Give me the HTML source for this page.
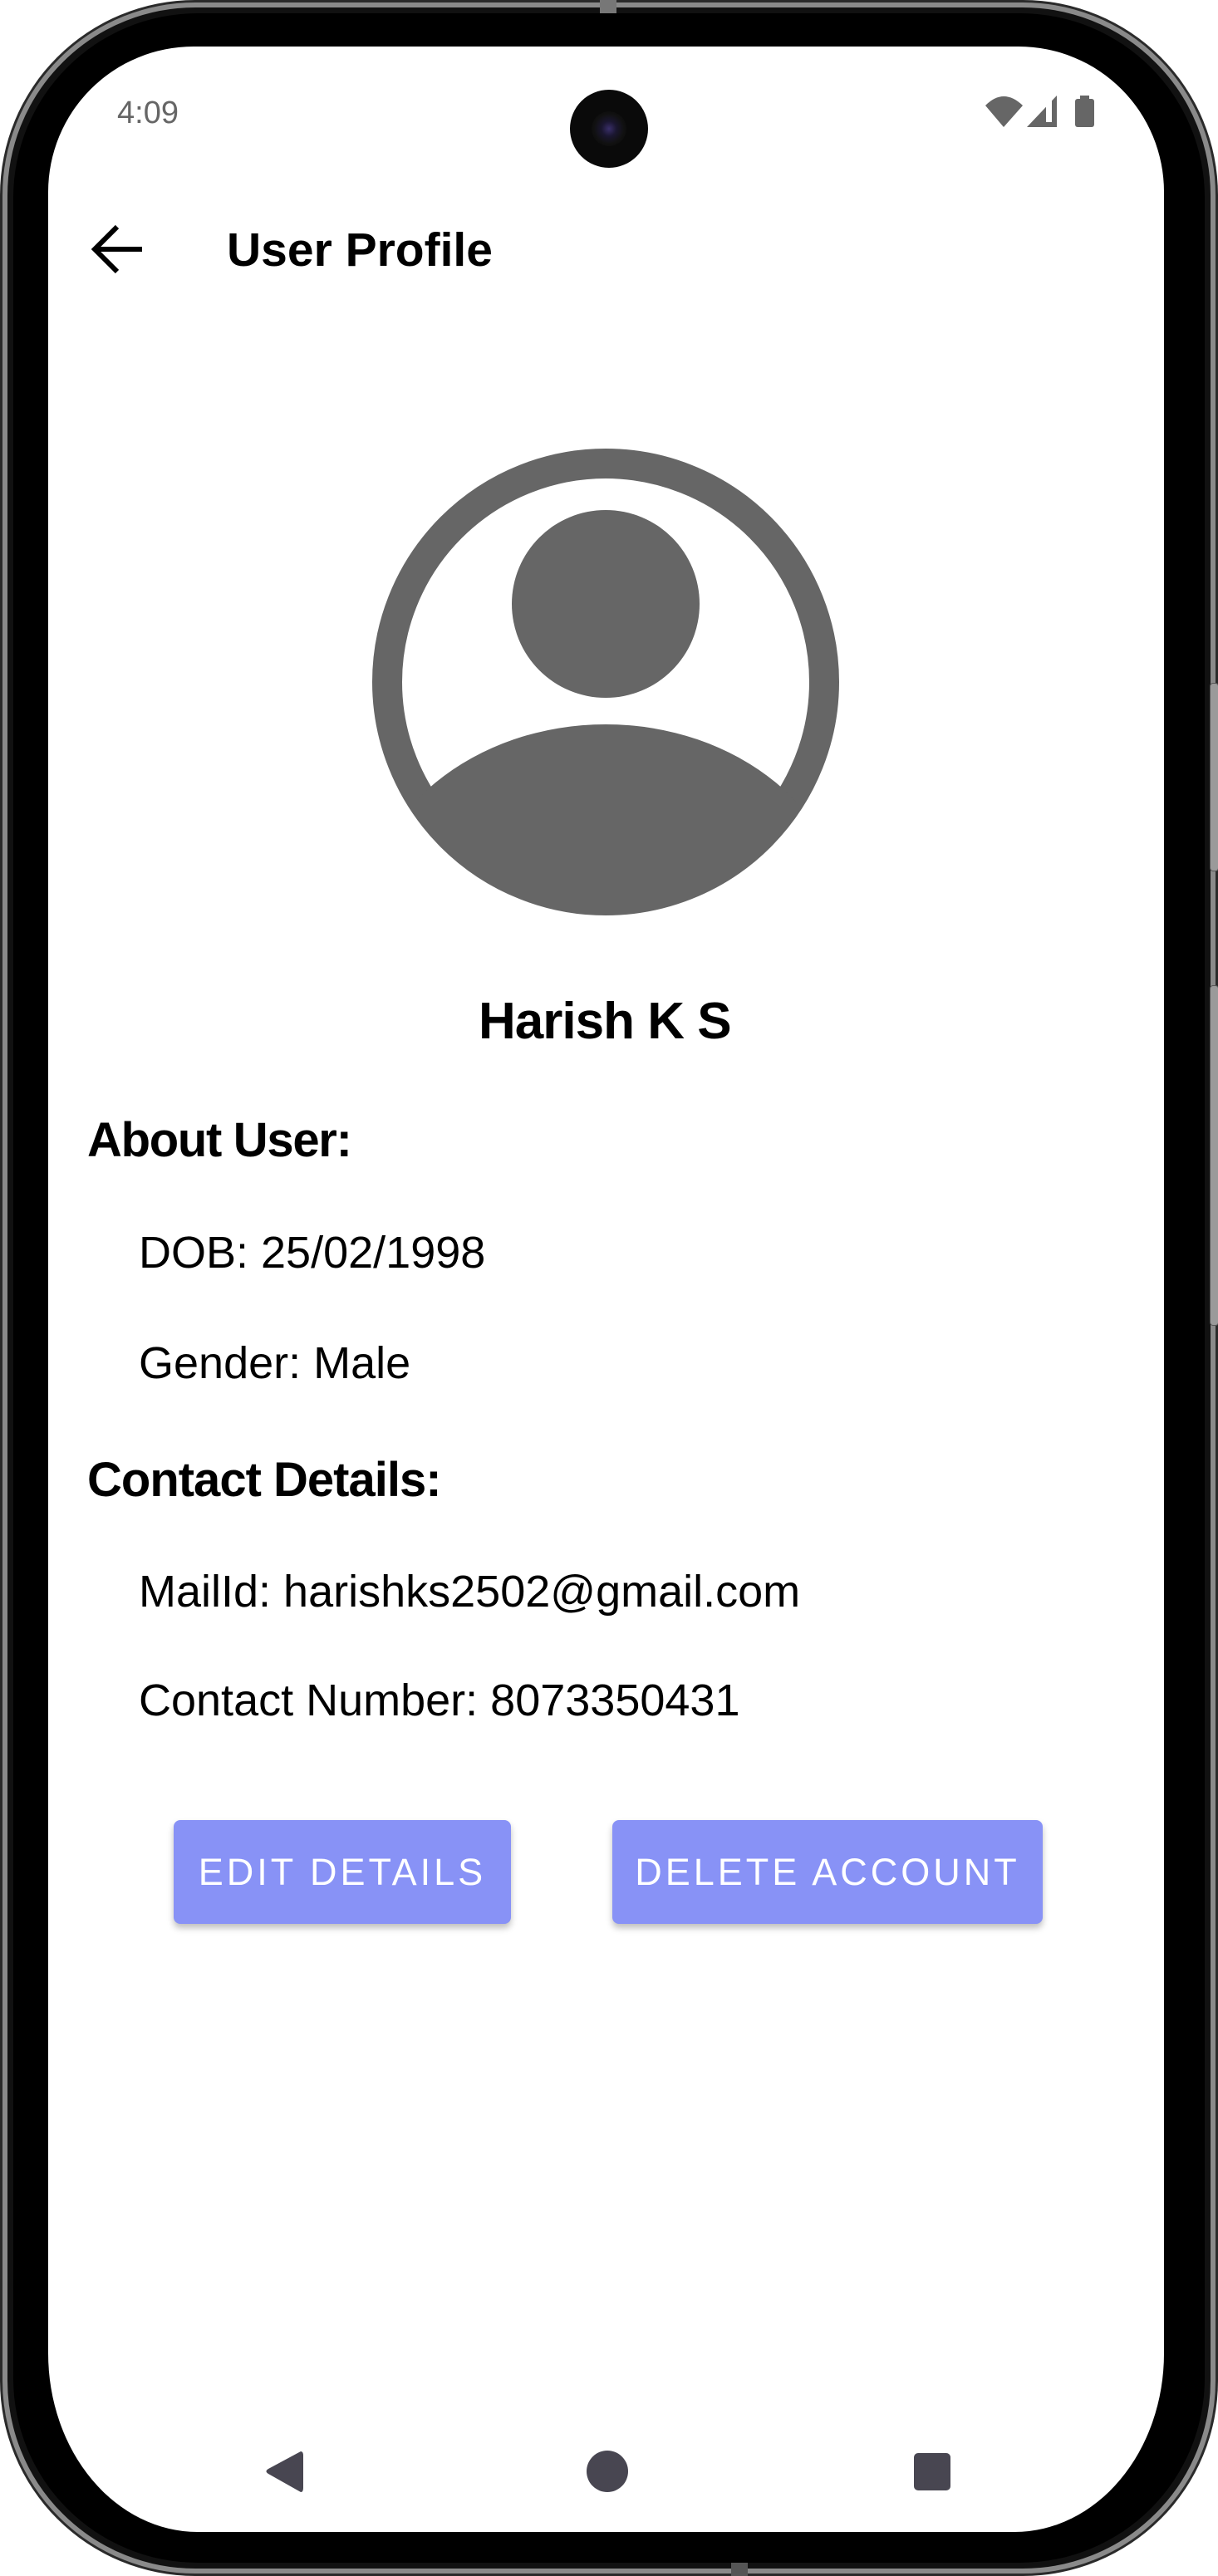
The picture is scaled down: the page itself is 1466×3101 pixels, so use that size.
<!DOCTYPE html>
<html><head><meta charset="utf-8"><style>
html,body{margin:0;padding:0;background:#fff;}
body{width:1466px;height:3101px;position:relative;overflow:hidden;font-family:"Liberation Sans",Arial,sans-serif;}
.abs{position:absolute;}
#outer{left:0;top:0;width:1466px;height:3101px;border-radius:235px;background:#2a2a2a;}
#ring{left:3px;top:3px;width:1448px;height:3083px;border-radius:232px;border:6px solid #8a8a8a;background:#111;}
#black{left:16px;top:16px;width:1434px;height:3069px;border-radius:222px;background:#000;}
#screen{left:58px;top:56px;width:1343px;height:2992px;border-radius:175px 175px 180px 180px/175px 175px 215px 215px;background:#fff;overflow:hidden;}
.t{position:absolute;white-space:nowrap;line-height:1;color:#000;}
.btn{position:absolute;background:#8892f6;border-radius:8px;box-shadow:0 5px 8px rgba(0,0,0,0.25);color:#fff;font-size:45px;letter-spacing:4px;display:flex;align-items:center;justify-content:center;}
.side{position:absolute;left:1456px;width:9px;background:#9a9a9a;border-radius:4px;border:1px solid #555;}
</style></head><body>
<div id="outer" class="abs"></div>
<div id="ring" class="abs"></div>
<div class="abs" style="left:722px;top:0;width:20px;height:16px;background:#777;"></div>
<div class="abs" style="left:880px;top:3085px;width:20px;height:16px;background:#555;"></div>
<div class="side" style="top:822px;height:225px;"></div>
<div class="side" style="top:1186px;height:408px;"></div>
<div id="black" class="abs"></div>
<div id="screen" class="abs"></div>

<!-- status bar -->
<div class="t" style="left:141px;top:117px;font-size:38px;color:#666;">4:09</div>
<div class="abs" style="left:686px;top:108px;width:94px;height:94px;border-radius:50%;background:#0a0a0a;"></div>
<div class="abs" style="left:712px;top:134px;width:42px;height:42px;border-radius:50%;background:radial-gradient(circle,#3a2f6a 0,#1a1630 30%,#111 60%,#050505 100%);"></div>
<svg class="abs" style="left:1180px;top:110px" width="150" height="50" viewBox="1180 110 150 50">
<path d="M1186 127 Q1208 105 1231 127 L1208 153 Z" fill="#666"/>
<path d="M1236 153 L1272 115 L1272 153 Z" fill="#666"/>
<path d="M1259 128 L1266 121 L1266 147 L1259 147 Z" fill="#fff"/>
<rect x="1294" y="119" width="23" height="34" rx="3" fill="#666"/>
<rect x="1300" y="115" width="11" height="6" fill="#666"/>
</svg>

<!-- app bar -->
<svg class="abs" style="left:100px;top:260px" width="90" height="80" viewBox="100 260 90 80">
<path d="M171 300 L116 300 M141 273 L114 300 L141 327" stroke="#000" stroke-width="6" fill="none"/>
</svg>
<div class="t" style="left:273px;top:273px;font-size:57px;font-weight:bold;">User Profile</div>

<!-- avatar -->
<svg class="abs" style="left:440px;top:530px" width="580" height="580" viewBox="440 530 580 580">
<defs><clipPath id="c"><circle cx="729" cy="821" r="280"/></clipPath></defs>
<circle cx="729" cy="821" r="263" fill="none" stroke="#666" stroke-width="36"/>
<circle cx="729" cy="727" r="113" fill="#666"/>
<ellipse cx="729" cy="1112" rx="290" ry="240" fill="#666" clip-path="url(#c)"/>
</svg>

<div class="t" style="left:576px;top:1199px;font-size:62px;font-weight:bold;letter-spacing:-1px;">Harish K S</div>

<div class="t" style="left:105px;top:1344px;font-size:58px;font-weight:bold;letter-spacing:-1.3px;">About User:</div>
<div class="t" style="left:167px;top:1481px;font-size:54px;">DOB: 25/02/1998</div>
<div class="t" style="left:167px;top:1614px;font-size:54px;">Gender: Male</div>
<div class="t" style="left:105px;top:1753px;font-size:58px;font-weight:bold;letter-spacing:-1px;">Contact Details:</div>
<div class="t" style="left:167px;top:1889px;font-size:54px;">MailId: harishks2502@gmail.com</div>
<div class="t" style="left:167px;top:2020px;font-size:54px;">Contact Number: 8073350431</div>

<div class="btn" style="left:209px;top:2191px;width:406px;height:125px;">EDIT DETAILS</div>
<div class="btn" style="left:737px;top:2191px;width:518px;height:125px;">DELETE ACCOUNT</div>

<!-- nav bar -->
<svg class="abs" style="left:300px;top:2940px" width="880" height="70" viewBox="300 2940 880 70">
<path d="M362 2951 Q365 2951 365 2956 L365 2995 Q365 3000 362 3000 L323 2978 Q318 2975 323 2972 Z" fill="#484651"/>
<circle cx="731" cy="2975" r="25" fill="#484651"/>
<rect x="1100" y="2953" width="44" height="45" rx="5" fill="#484651"/>
</svg>
</body></html>
